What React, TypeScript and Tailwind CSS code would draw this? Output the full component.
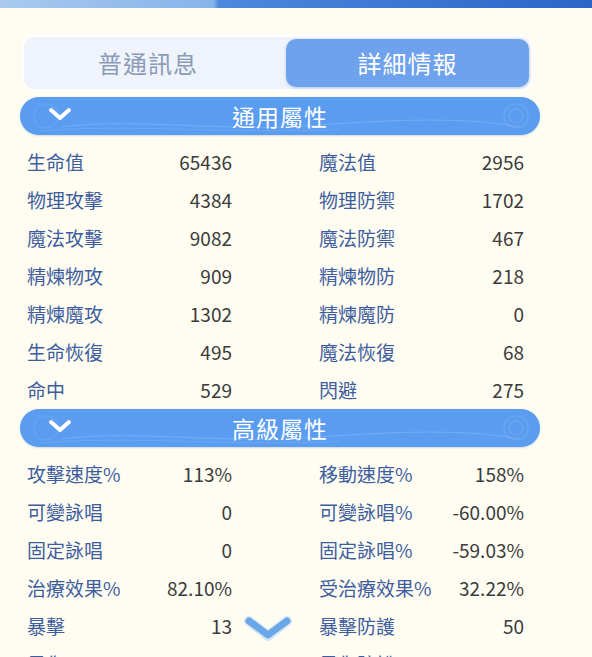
import React from "react";

const general: [string, string, string, string][] = [
  ["生命值", "65436", "魔法值", "2956"],
  ["物理攻擊", "4384", "物理防禦", "1702"],
  ["魔法攻擊", "9082", "魔法防禦", "467"],
  ["精煉物攻", "909", "精煉物防", "218"],
  ["精煉魔攻", "1302", "精煉魔防", "0"],
  ["生命恢復", "495", "魔法恢復", "68"],
  ["命中", "529", "閃避", "275"],
];

const advanced: [string, string, string, string][] = [
  ["攻擊速度%", "113%", "移動速度%", "158%"],
  ["可變詠唱", "0", "可變詠唱%", "-60.00%"],
  ["固定詠唱", "0", "固定詠唱%", "-59.03%"],
  ["治療效果%", "82.10%", "受治療效果%", "32.22%"],
  ["暴擊", "13", "暴擊防護", "50"],
  ["暴傷", "201", "暴傷防護", "10.00%"],
];

function Header({ title }: { title: string }) {
  return (
    <div className="relative mx-[20px] w-[520px] h-[38px] rounded-full bg-[#5a9cef] flex items-center justify-center overflow-hidden shadow-[0_1px_2px_rgba(60,110,190,0.25)]">
      <svg className="absolute left-0 top-0" width="520" height="38" viewBox="0 0 520 38" fill="none">
        <path d="M40 30 C 120 20, 200 36, 300 28 S 460 22, 500 30" stroke="#7fb4f5" strokeWidth="1.2" opacity="0.6" />
        <path d="M20 34 C 110 26, 220 38, 320 32" stroke="#7fb4f5" strokeWidth="1" opacity="0.5" />
        <circle cx="496" cy="19" r="12" stroke="#7db2f3" strokeWidth="1.2" opacity="0.6" />
        <circle cx="496" cy="19" r="7" stroke="#7db2f3" strokeWidth="1.2" opacity="0.6" />
        <circle cx="26" cy="19" r="12" stroke="#7db2f3" strokeWidth="1.2" opacity="0.45" />
        <path d="M31 13 L40 21 L49 13" stroke="white" strokeWidth="4" strokeLinecap="round" strokeLinejoin="round" />
      </svg>
      <span className="relative text-white text-[23px] leading-none tracking-[1px]">{title}</span>
    </div>
  );
}

function Rows({ rows }: { rows: [string, string, string, string][] }) {
  return (
    <div className="ml-[27px] w-[497px] pt-[8px] grid grid-cols-2 gap-x-[87px]">
      {rows.map((r, i) => (
        <React.Fragment key={i}>
          <div className="h-[38px] flex items-center justify-between">
            <span className="text-[19px] text-[#3e5d9e]">{r[0]}</span>
            <span className="text-[19px] text-[#3b3b3b]">{r[1]}</span>
          </div>
          <div className="h-[38px] flex items-center justify-between">
            <span className="text-[19px] text-[#3e5d9e]">{r[2]}</span>
            <span className="text-[19px] text-[#3b3b3b]">{r[3]}</span>
          </div>
        </React.Fragment>
      ))}
    </div>
  );
}

export default function App() {
  return (
    <div
      className="relative w-[592px] h-[657px] overflow-hidden bg-[#fffdf2]"
      style={{ fontFamily: '"Noto Sans CJK TC", "Noto Sans", sans-serif' }}
    >
      <div className="h-[8px] w-full bg-[linear-gradient(90deg,#a9c9ef_0%,#86b4ea_36%,#4c88dc_37%,#3a76d4_70%,#2c65c6_100%)]" />
      <div className="ml-[22px] mt-[27px] w-[511px] h-[56px] rounded-[12px] bg-[#eff3fb] border-2 border-white flex p-[2px]">
        <div className="flex-1 flex items-center justify-center pr-[16px]">
          <span className="text-[24px] text-[#8b9bb7] tracking-[1px]">普通訊息</span>
        </div>
        <div className="w-[243px] rounded-[10px] bg-[#6fa2ec] flex items-center justify-center shadow-[0_1px_3px_rgba(70,120,200,0.35)]">
          <span className="text-[24px] text-white tracking-[1px]">詳細情報</span>
        </div>
      </div>
      <div className="h-[6px]" />
      <Header title="通用屬性" />
      <Rows rows={general} />
      <Header title="高級屬性" />
      <Rows rows={advanced} />
      <svg className="absolute left-[242px] top-[612px]" width="52" height="36" viewBox="0 0 52 36" fill="none">
        <path d="M7 9 L26 24 L45 9" stroke="#a9cdf3" strokeWidth="10" strokeLinecap="round" strokeLinejoin="round" opacity="0.45" />
        <path d="M7 9 L26 23 L45 9" stroke="#6aa7e8" strokeWidth="7" strokeLinecap="round" strokeLinejoin="round" />
      </svg>
    </div>
  );
}
